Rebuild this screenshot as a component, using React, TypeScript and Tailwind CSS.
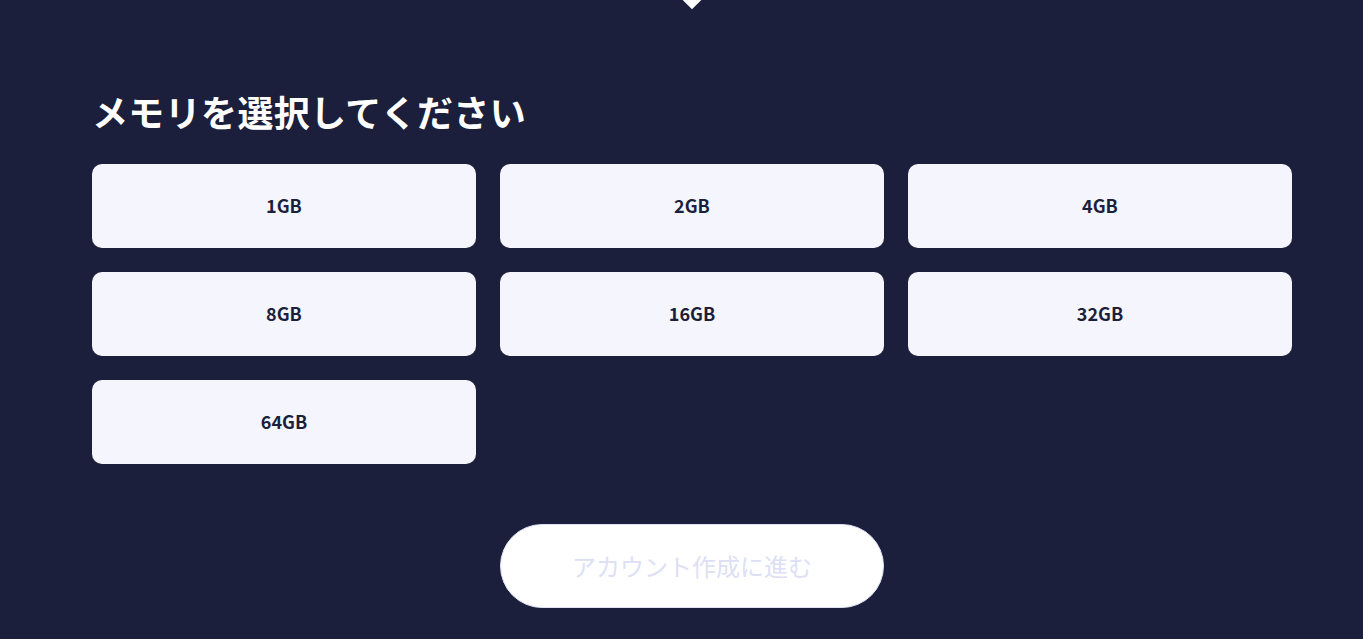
import { useState } from 'react';

const sizes = ['1GB', '2GB', '4GB', '8GB', '16GB', '32GB', '64GB'];

export default function App() {
    const [selected, setSelected] = useState<string | null>(null);

    return (
        <div
            className="relative min-h-[639px] w-full overflow-hidden bg-[#1b1f3b]"
            style={{ fontFamily: '"Noto Sans CJK JP", "Noto Sans", sans-serif' }}
        >
            {/* step pointer from the section above */}
            <div className="absolute left-[684px] top-[-10px] h-[16px] w-[16px] rotate-45 bg-white" />

            <div className="ml-[92px] w-[1200px] pt-[85px] pb-[31px]">
                <h2 className="mb-[27px] text-[36px] font-bold leading-[52px] tracking-[0.35px] text-white">
                    メモリを選択してください
                </h2>

                <div className="grid grid-cols-3 gap-6">
                    {sizes.map((s) => (
                        <button
                            key={s}
                            onClick={() => setSelected(s)}
                            className={
                                'flex h-[84px] items-center justify-center rounded-[10px] pb-[2px] text-[18px] font-bold ' +
                                (selected === s
                                    ? 'bg-[#3b4bd8] text-white'
                                    : 'bg-[#f5f6fd] text-[#1b1f3b]')
                            }
                        >
                            {s}
                        </button>
                    ))}
                </div>

                <div className="mt-[60px] flex justify-center">
                    <button
                        disabled={!selected}
                        className="flex h-[84px] w-[384px] items-center justify-center rounded-full border border-[#dfe2f6] bg-white text-[24px] text-[#dde0f5]"
                    >
                        アカウント作成に進む
                    </button>
                </div>
            </div>
        </div>
    );
}
